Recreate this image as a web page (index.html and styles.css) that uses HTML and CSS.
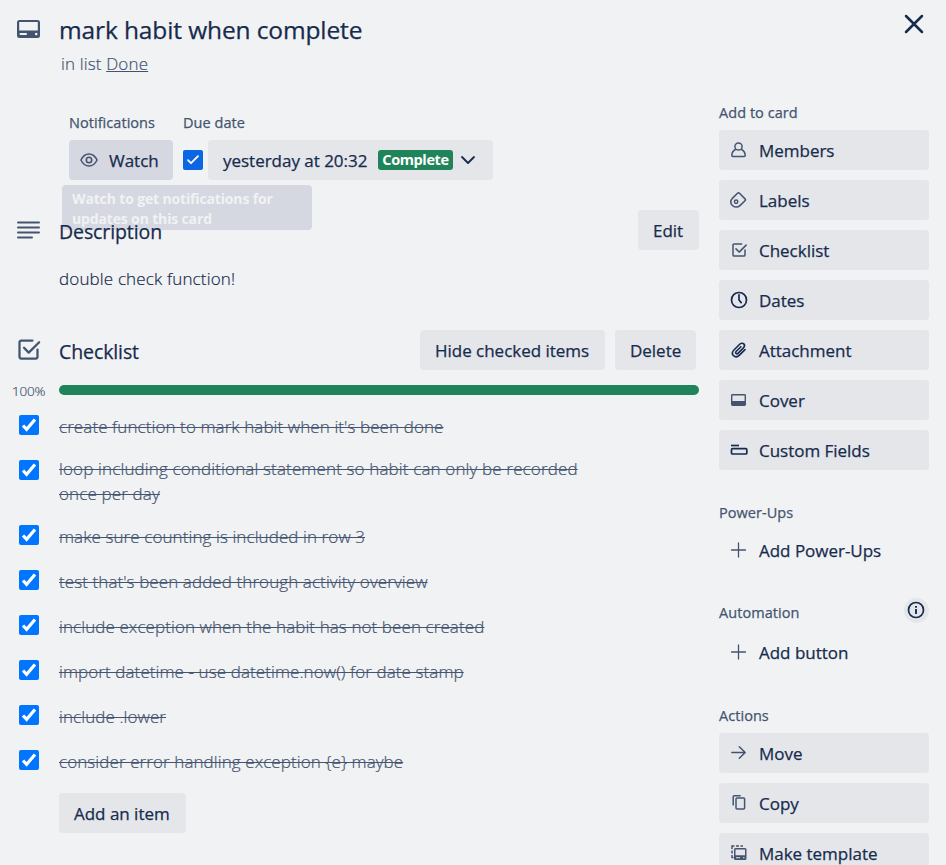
FILE: index.html
```html
<!DOCTYPE html>
<html lang="en">
<head>
<meta charset="utf-8">
<title>mark habit when complete</title>
<link rel="stylesheet" href="styles.css">
</head>
<body>
<svg width="0" height="0" class="defs">
  <symbol id="check" viewBox="0 0 20 20"><path d="M4 10.500l3.600 3.800L16 4.500" fill="none" stroke="#fff" stroke-width="3.200"/></symbol>
  <symbol id="checklist" viewBox="0 0 24 24"><path d="M15.500 4H5.500A1.500 1.500 0 0 0 4 5.500v13A1.500 1.500 0 0 0 5.500 20h13a1.500 1.500 0 0 0 1.500-1.500V12M8 10.500l4.200 4.300L21.500 5.500" fill="none" stroke="currentColor" stroke-width="2" stroke-linecap="round" stroke-linejoin="round"/></symbol>
  <symbol id="plus" viewBox="0 0 20 20"><path d="M9.500 3v14M2.500 10h14" fill="none" stroke="currentColor" stroke-width="1.300" stroke-linecap="round"/></symbol>
</svg>
<div class="dialog">
  <button class="close" aria-label="Close"><svg viewBox="0 0 20 20" class="i20"><path d="M2 2l16 16M18 2L2 18" fill="none" stroke="currentColor" stroke-width="2.500" stroke-linecap="round"/></svg></button>
  <main class="main">
    <header class="head">
      <svg class="card-icon" viewBox="0 0 23 18"><path fill-rule="evenodd" d="M2.500 0h18A2.500 2.500 0 0 1 23 2.500v13a2.500 2.500 0 0 1-2.500 2.500h-18A2.500 2.500 0 0 1 0 15.500v-13A2.500 2.500 0 0 1 2.500 0zm-.3 2v8.500h18.600V2zM3.500 13a1 1 0 0 0 0 2H9a1 1 0 0 0 0-2zm15.700-.3a1.300 1.300 0 1 0 .01 0z"/></svg>
      <h1 class="title">mark habit when complete</h1>
      <p class="inlist">in list <a class="link">Done</a></p>
    </header>
    <div class="meta">
      <section class="field">
        <h3 class="label">Notifications</h3>
        <button class="btn watch"><svg class="i20" viewBox="0 0 20 20" fill="none" stroke="currentColor"><path d="M1.900 10C3.800 6.200 6.600 4 10 4s6.200 2.200 8.100 6c-1.900 3.800-4.700 6-8.100 6s-6.200-2.200-8.100-6z" stroke-width="1.500"/><circle cx="10" cy="10" r="2.700" stroke-width="1.600"/></svg><span>Watch</span></button>
        <div class="tooltip">Watch to get notifications for updates on this card</div>
      </section>
      <section class="field">
        <h3 class="label due-label">Due date</h3>
        <div class="due">
          <span class="box flat"><svg viewBox="0 0 20 20"><path d="M5 10.200l3 3L15 6.200" fill="none" stroke="#fff" stroke-width="1.800" stroke-linecap="round" stroke-linejoin="round"/></svg></span>
          <button class="btn due-btn"><span class="due-text">yesterday at 20:32</span><span class="badge">Complete</span><svg class="i20" viewBox="0 0 20 20"><path d="M4 7l6 6 6-6" fill="none" stroke="currentColor" stroke-width="1.800" stroke-linecap="round" stroke-linejoin="round"/></svg></button>
        </div>
      </section>
    </div>
    <section class="desc">
      <div class="row">
        <svg class="lines" viewBox="0 0 23 19"><path d="M1 1.500h21M1 6.500h21M1 11.500h21M1 16.500h14" stroke="currentColor" stroke-width="2" stroke-linecap="round"/></svg>
        <h2 class="heading">Description</h2>
        <button class="btn edit">Edit</button>
      </div>
      <p class="desc-text">double check function!</p>
    </section>
    <section class="checklist">
      <div class="row">
        <svg class="checklist-icon" viewBox="0 0 24 24"><use href="#checklist"/></svg>
        <h2 class="heading cl-heading">Checklist</h2>
        <button class="btn hide">Hide checked items</button>
        <button class="btn delete">Delete</button>
      </div>
      <div class="progress"><span class="pct">100%</span><span class="bar"></span></div>
      <ul class="items">
        <li class="item"><span class="box"><svg viewBox="0 0 20 20"><use href="#check"/></svg></span><s>create function to mark habit when it's been done</s></li>
        <li class="item two"><span class="box"><svg viewBox="0 0 20 20"><use href="#check"/></svg></span><s>loop including conditional statement so habit can only be recorded<br>once per day</s></li>
        <li class="item"><span class="box"><svg viewBox="0 0 20 20"><use href="#check"/></svg></span><s>make sure counting is included in row 3</s></li>
        <li class="item"><span class="box"><svg viewBox="0 0 20 20"><use href="#check"/></svg></span><s>test that's been added through activity overview</s></li>
        <li class="item"><span class="box"><svg viewBox="0 0 20 20"><use href="#check"/></svg></span><s>include exception when the habit has not been created</s></li>
        <li class="item"><span class="box"><svg viewBox="0 0 20 20"><use href="#check"/></svg></span><s>import datetime - use datetime.now() for date stamp</s></li>
        <li class="item"><span class="box"><svg viewBox="0 0 20 20"><use href="#check"/></svg></span><s>include .lower</s></li>
        <li class="item"><span class="box"><svg viewBox="0 0 20 20"><use href="#check"/></svg></span><s>consider error handling exception {e} maybe</s></li>
      </ul>
      <button class="btn add">Add an item</button>
    </section>
  </main>
  <aside class="side">
    <section class="group">
      <h3 class="label">Add to card</h3>
      <button class="btn"><svg class="i20 soft" viewBox="0 0 20 20" fill="none" stroke="currentColor" stroke-width="1.500"><circle cx="9.500" cy="6.500" r="3.600"/><path d="M6.800 9.300C4.300 10.500 2.900 12.500 2.800 15.300q0 1.200 1 1.200h11.400q1 0 1-1.200c-.1-2.800-1.500-4.800-4-6"/></svg><span>Members</span></button>
      <button class="btn"><svg class="i20 soft" viewBox="0 0 20 20" fill="none" stroke="currentColor" stroke-width="1.500"><path d="M8.500 3.300q1-.9 2 0l5.500 5.600q.9.900 0 1.800l-4.800 4.700c-2.500 2.400-6 2.200-8-.1-1.800-2-1.600-5 .4-7.200z"/><circle cx="7.100" cy="11.800" r="1.700"/></svg><span>Labels</span></button>
      <button class="btn"><svg class="i20 small soft" viewBox="0 0 24 24"><use href="#checklist"/></svg><span>Checklist</span></button>
      <button class="btn"><svg class="i20" viewBox="0 0 20 20" fill="none" stroke="currentColor" stroke-width="1.700"><circle cx="10" cy="10" r="7.500"/><path d="M10 4.800V10l2.200 2.600" stroke-linecap="round"/></svg><span>Dates</span></button>
      <button class="btn"><svg class="i20" viewBox="0 0 20 20" fill="none" stroke="currentColor" stroke-width="1.600" stroke-linecap="round"><path d="M16 9.600l-5.300 5.300c-2 2-4.600 2.300-6.200.8-1.600-1.600-1.300-4 .7-6L10.400 4.500c1.500-1.500 3.300-1.700 4.400-.6s.9 2.700-.6 4.200l-5 5c-.8.800-1.600.9-2.200.3s-.5-1.300.3-2.100l4.600-4.600"/></svg><span>Attachment</span></button>
      <button class="btn"><svg class="i20 soft" viewBox="0 0 20 20"><path fill-rule="evenodd" d="M3.400 4h12.200A1.400 1.400 0 0 1 17 5.400v9.200a1.400 1.400 0 0 1-1.400 1.400H3.400A1.400 1.400 0 0 1 2 14.600V5.400A1.400 1.400 0 0 1 3.400 4zm0 1.500V11h12.200V5.500z" fill="currentColor"/></svg><span>Cover</span></button>
      <button class="btn"><svg class="i20" viewBox="0 0 20 20" fill="none" stroke="currentColor" stroke-width="1.700"><path d="M2 5.500h8"/><rect x="2.500" y="8.700" width="15.300" height="5.300" rx="1"/></svg><span>Custom Fields</span></button>
    </section>
    <section class="group">
      <h3 class="label">Power-Ups</h3>
      <button class="btn plain"><svg class="i20 soft" viewBox="0 0 20 20"><use href="#plus"/></svg><span>Add Power-Ups</span></button>
    </section>
    <section class="group automation">
      <div class="split"><h3 class="label">Automation</h3><span class="info"><svg class="i20" viewBox="0 0 20 20" fill="none" stroke="currentColor"><circle cx="10" cy="10" r="7.500" stroke-width="1.700"/><path d="M10 9v5M10 6v1.700" stroke-width="1.900"/></svg></span></div>
      <button class="btn plain"><svg class="i20 soft" viewBox="0 0 20 20"><use href="#plus"/></svg><span>Add button</span></button>
    </section>
    <section class="group">
      <h3 class="label">Actions</h3>
      <button class="btn"><svg class="i20 soft" viewBox="0 0 20 20" fill="none" stroke="currentColor" stroke-width="1.500" stroke-linecap="round" stroke-linejoin="round"><path d="M2.800 9.500h13.200M10.300 3.700l5.900 5.800-5.900 5.800"/></svg><span>Move</span></button>
      <button class="btn"><svg class="i20 soft" viewBox="0 0 20 20" fill="none" stroke="currentColor" stroke-width="1.500" stroke-linejoin="round"><path d="M4.200 12.500V3.800q0-1 1-1h6.500"/><rect x="7" y="5" width="8.600" height="11" rx="1"/></svg><span>Copy</span></button>
      <button class="btn"><svg class="i20 soft" viewBox="0 0 20 20" fill="none" stroke="currentColor" stroke-width="1.500"><path d="M3 6V3h2.500M7 3h3M11.500 3H14M3 7.500v3M3 12v2.500h1.500"/><path fill="currentColor" stroke="none" fill-rule="evenodd" d="M6.500 5h9.500a1.500 1.500 0 0 1 1.500 1.500v9a1.500 1.500 0 0 1-1.500 1.500H6.500A1.500 1.500 0 0 1 5 15.500v-9A1.500 1.500 0 0 1 6.500 5zm0 1.500v5.700H16V6.500zm.5 7.700v1h4v-1zm7 0v1h1.500v-1z"/></svg><span>Make template</span></button>
    </section>
  </aside>
</div>
</body>
</html>
```
FILE: styles.css
```css
* { box-sizing: border-box; }
html, body { margin: 0; height: 865px; overflow: hidden; background: #f1f2f4; }
body {
  font-family: "Open Sans", "Noto Sans", sans-serif;
  font-size: 17px;
  line-height: 25px;
  letter-spacing: -0.2px;
  color: #172b4d;
}
h1, h2, h3, p, ul { margin: 0; padding: 0; }
svg { flex: none; display: block; }
.defs { position: absolute; }
.dialog {
  position: relative;
  display: grid;
  grid-template-columns: 640px 210px;
  column-gap: 20px;
  height: 865px;
  padding-left: 59px;
  overflow: hidden;
}
.close {
  position: absolute;
  top: 14px;
  right: 22px;
  padding: 0;
  border: 0;
  background: none;
  color: #172b4d;
}
.i20 { width: 20px; height: 20px; }
.soft { color: #44546f; }
.title, .heading, .label, .btn { -webkit-text-stroke: 0.25px currentColor; }
.inlist, .desc-text, .item, .pct { -webkit-text-stroke: 0.2px currentColor; }

.head {
  display: grid;
  grid-template-columns: 42px 1fr;
  margin-left: -42px;
  padding-top: 14px;
}
.card-icon { width: 23px; height: 18px; margin-top: 6px; fill: #44546f; }
.title { font-size: 24.500px; line-height: 32px; font-weight: 400; letter-spacing: -0.12px; }
.inlist { grid-column: 2; margin: 5px 0 0 2px; color: #44546f; font-weight: 300; letter-spacing: 0.15px; }
.link { text-decoration: underline; text-underline-offset: 1px; }

.label { font-size: 14.500px; line-height: 20px; font-weight: 400; letter-spacing: 0.05px; color: #44546f; }
.meta { display: flex; gap: 10px; margin: 37px 0 0 10px; }
.field { position: relative; }
.field .label { margin-bottom: 7px; }
.btn {
  display: flex;
  align-items: center;
  height: 40px;
  padding: 1px 15px 0;
  border: 0;
  border-radius: 4px;
  background: #e4e6ea;
  color: #172b4d;
  font: inherit;
  font-weight: 400;
  letter-spacing: -0.02px;
  white-space: nowrap;
}
.btn .i20 { margin-top: -1px; }
.watch { width: 104px; padding-left: 10px; gap: 10px; background: #d5d8e0; }
.watch .i20 { color: #44546f; }
.tooltip {
  position: absolute;
  top: 72px;
  left: -7px;
  width: 250px;
  height: 45px;
  padding: 4px 10px 0;
  border-radius: 4px;
  background: #d5d8e0;
  color: #f1f2f4;
  font-size: 14px;
  line-height: 20px;
  font-weight: 700;
  letter-spacing: -0.15px;
  overflow: hidden;
}
.due { display: flex; align-items: center; gap: 5px; }
.box { flex: none; width: 20px; height: 20px; border-radius: 2px; background: #0075ff; }
.flat { background: #0c66e4; }
.due-btn { width: 285px; }
.due-text { width: 155px; text-align: left; }
.badge {
  width: 75px;
  height: 20px;
  margin: -1px 5px 0 0;
  border-radius: 3px;
  background: #1f845a;
  color: #fff;
  font-size: 14.500px;
  line-height: 20px;
  font-weight: 700;
  letter-spacing: -0.400px;
  text-align: center;
  -webkit-text-stroke: 0;
}

.desc { margin-top: 30px; }
.row { display: flex; position: relative; margin-left: -42px; }
.lines { width: 23px; height: 19px; margin: 11px 19px 0 0; color: #44546f; }
.heading { flex: 1; padding-top: 9px; font-size: 19.500px; line-height: 26px; font-weight: 400; letter-spacing: -0.1px; }
.edit { width: 61px; }
.desc-text { margin-top: 16px; font-weight: 300; letter-spacing: 0.15px; }

.checklist { margin-top: 39px; }
.checklist-icon { width: 27px; height: 27px; margin: 6px 17px 0 -2px; color: #44546f; }
.hide { width: 185px; margin-right: 10px; }
.delete { width: 81px; margin-right: 3px; }
.progress { display: flex; align-items: center; height: 20px; margin: 10px 0 0 -47px; }
.pct { width: 47px; padding-top: 2px; font-size: 13.500px; font-weight: 300; color: #44546f; }
.bar { flex: 1; height: 10px; border-radius: 5px; background: #1f845a; }
.items { margin: 15px 0 0 -40px; list-style: none; }
.item { display: flex; height: 45px; gap: 20px; color: #44546f; font-weight: 300; letter-spacing: 0.09px; white-space: nowrap; }
.item s { margin-top: -1px; text-decoration-thickness: 1px; }
.two { height: 65px; }
.two s { margin-top: -4px; letter-spacing: 0.14px; }
.add { width: 127px; margin-top: -2px; }

.side { padding-top: 103px; }
.group { display: flex; flex-direction: column; margin-bottom: 33px; }
.side .label { margin-bottom: 7px; }
.side .btn { width: 210px; padding-left: 10px; gap: 10px; margin-bottom: 10px; }
.side .group .btn:last-child { margin-bottom: 0; }
.side .plain { background: none; }
.side .small { width: 18px; height: 18px; margin: -1px 1px 0; }
.automation { margin-bottom: 34px; }
.split { display: flex; justify-content: space-between; height: 29px; }
.info { width: 25px; height: 25px; margin-top: -5px; padding: 2px; border-radius: 50%; background: #e4e6ea; }
```
